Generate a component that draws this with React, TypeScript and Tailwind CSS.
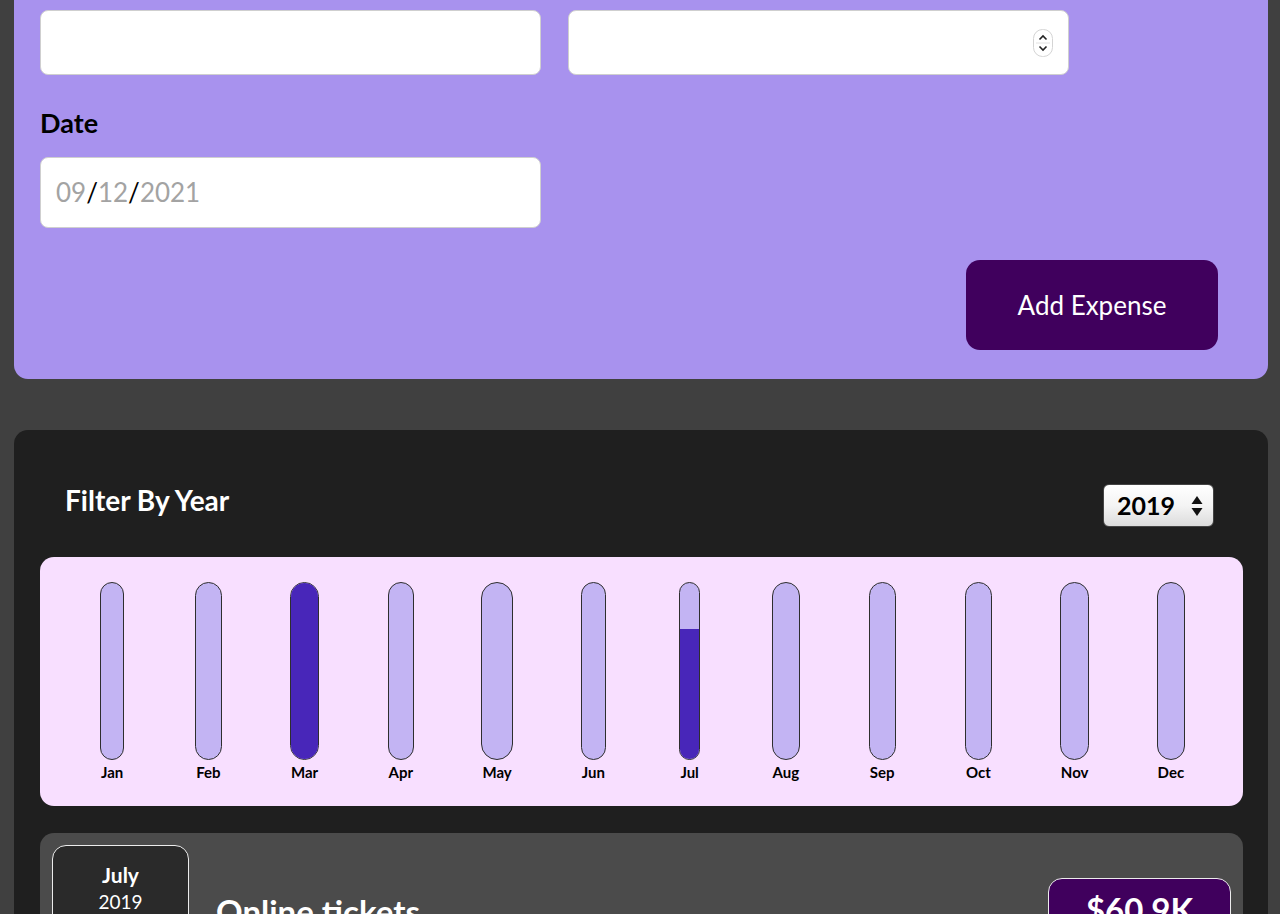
import { type FC } from "react";

interface MonthPoint {
  label: string;
  value: number;
}

const months: MonthPoint[] = [
  { label: "Jan", value: 0 },
  { label: "Feb", value: 0 },
  { label: "Mar", value: 100 },
  { label: "Apr", value: 0 },
  { label: "May", value: 0 },
  { label: "Jun", value: 0 },
  { label: "Jul", value: 74 },
  { label: "Aug", value: 0 },
  { label: "Sep", value: 0 },
  { label: "Oct", value: 0 },
  { label: "Nov", value: 0 },
  { label: "Dec", value: 0 },
];

const font = { fontFamily: "Lato, 'Noto Sans', sans-serif" };

const Spinner: FC = () => (
  <svg
    width="20"
    height="28"
    viewBox="0 0 20 28"
    className="absolute right-[15px] top-[18px]"
  >
    <rect x="0.5" y="0.5" width="19" height="27" rx="9" fill="#fff" stroke="#d4d4d4" />
    <line x1="3" y1="14" x2="17" y2="14" stroke="#e2e2e2" />
    <path d="M6.5 10.5 L10 7 L13.5 10.5" fill="none" stroke="#222" strokeWidth="1.6" />
    <path d="M6.5 17.5 L10 21 L13.5 17.5" fill="none" stroke="#222" strokeWidth="1.6" />
  </svg>
);

const ChartBar: FC<{ point: MonthPoint }> = ({ point }) => (
  <div className="flex-1 flex justify-center h-full">
    <div className="inline-flex flex-col h-full">
      <div className="flex-1 w-full border-[1.5px] border-[#2e2e2e] rounded-full bg-[#c3b4f3] overflow-hidden flex flex-col justify-end">
        <div className="bg-[#4826b9] w-full" style={{ height: `${point.value}%` }} />
      </div>
      <span className="text-[15px] font-bold text-center leading-none mt-[5px] px-[1px] text-black">
        {point.label}
      </span>
    </div>
  </div>
);

export default function App() {
  return (
    <div className="min-h-screen h-[914px] overflow-hidden bg-[#404040] pr-[12px] pl-[14px]" style={font}>
      {/* new expense form */}
      <div className="bg-[#a892ee] rounded-b-[14px] pt-[10px] pl-[26px] pr-[50px] pb-[29px]">
        <div className="flex gap-[27px]">
          <input
            type="text"
            className="w-[501px] h-[65px] bg-white rounded-[8px] border border-[#cfcfcf] px-4 text-[24px]"
          />
          <div className="relative w-[501px] h-[65px] bg-white rounded-[8px] border border-[#cfcfcf]">
            <Spinner />
          </div>
        </div>
        <label className="block mt-[34px] text-[27px] font-bold text-black leading-none">Date</label>
        <div className="mt-[21px] w-[501px] h-[71px] bg-white rounded-[8px] border border-[#cfcfcf] flex items-center px-[15px] text-[26px] text-[#a3a3a3]">
          <span>09</span>
          <span className="text-black">/</span>
          <span>12</span>
          <span className="text-black">/</span>
          <span>2021</span>
        </div>
        <div className="flex justify-end mt-[32px]">
          <button className="w-[252px] h-[90px] rounded-[14px] bg-[#40005d] text-white text-[26px]">
            Add Expense
          </button>
        </div>
      </div>

      {/* expenses list */}
      <div className="mt-[51px] bg-[#1f1f1f] rounded-[14px] pl-[26px] pr-[25px] pt-[54px]">
        <div className="flex items-start justify-between pl-[25px] pr-[29px]">
          <h2 className="mt-[2px] text-[28px] font-bold text-white leading-none">Filter By Year</h2>
          <div className="flex items-center justify-between w-[111px] h-[43px] rounded-[6px] border border-[#444] bg-gradient-to-b from-white via-[#f4f4f4] to-[#dcdcdc] pl-[13px] pr-[10px]">
            <span className="text-[25px] font-bold text-black leading-none">2019</span>
            <svg width="12" height="22" viewBox="0 0 12 22">
              <path d="M6 1 L11.5 9 L0.5 9 Z" fill="#111" />
              <path d="M6 21 L11.5 13 L0.5 13 Z" fill="#111" />
            </svg>
          </div>
        </div>

        <div className="mt-[30px] h-[249px] bg-[#f8dfff] rounded-[14px] px-[24px] pt-[25px] pb-[26px] flex">
          {months.map((m) => (
            <ChartBar key={m.label} point={m} />
          ))}
        </div>

        <div className="mt-[27px] bg-[#4b4b4b] rounded-[14px] p-[12px] flex items-start gap-[27px]">
          <div className="w-[137px] h-[120px] bg-[#2a2a2a] border border-[#ececec] rounded-[14px] flex flex-col items-center pt-[18px] text-white">
            <span className="text-[21px] font-bold leading-none">July</span>
            <span className="text-[19px] leading-none mt-[7px]">2019</span>
          </div>
          <h3 className="mt-[50px] text-[33px] font-bold text-white leading-none flex-1">
            Online tickets
          </h3>
          <div className="mt-[33px] w-[183px] h-[80px] bg-[#40005d] border border-[#ececec] rounded-[14px] flex justify-center pt-[14px] text-white text-[33px] font-bold leading-none">
            $60.9K
          </div>
        </div>
      </div>
    </div>
  );
}
